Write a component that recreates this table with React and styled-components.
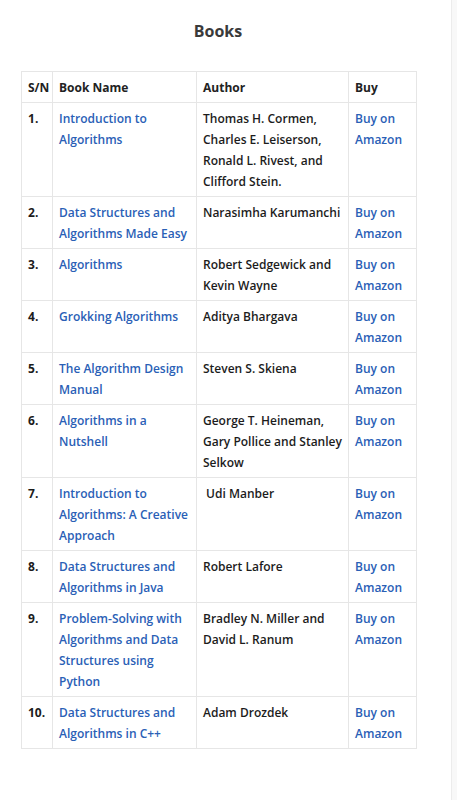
import styled, { createGlobalStyle } from "styled-components";

const GlobalStyle = createGlobalStyle`
    html, body {
        margin: 0;
        padding: 0;
        background: #f8f8f8;
    }
    body {
        font-family: "Open Sans", "Liberation Sans", sans-serif;
    }
`

const Page = styled.main`
    box-sizing: border-box;
    width: 452px;
    min-height: 800px;
    background: #fff;
    border-right: 1px solid #ececec;
    padding: 19px 21px 40px 21px;
`

const Title = styled.h2`
    margin: 0 0 28px;
    width: 394px;
    text-align: center;
    font-size: 16px;
    line-height: 24px;
    font-weight: 700;
    color: #3a3a3a;
`

const Table = styled.table`
    width: 395px;
    table-layout: fixed;
    border-collapse: collapse;
    font-size: 12px;
    font-weight: 600;
    line-height: 21px;
    color: #1c1c1c;

    & th, & td {
        border: 1px solid #e6e6e6;
        padding: 5px 6px 4px 6px;
        text-align: left;
        vertical-align: top;
    }

    & th {
        font-weight: 700;
        color: #222;
    }
`

const Col = styled.col`
    width: ${props => props.$w}px;
`

const Num = styled.td`
    font-weight: 700;
`

const Link = styled.a`
    color: #2a60b6;
    text-decoration: none;
    font-weight: 600;
`

const books = [
    { name: "Introduction to Algorithms", author: "Thomas H. Cormen, Charles E. Leiserson, Ronald L. Rivest, and Clifford Stein." },
    { name: "Data Structures and Algorithms Made Easy", author: "Narasimha Karumanchi" },
    { name: "Algorithms", author: "Robert Sedgewick and Kevin Wayne" },
    { name: "Grokking Algorithms", author: "Aditya Bhargava" },
    { name: "The Algorithm Design Manual", author: "Steven S. Skiena" },
    { name: "Algorithms in a Nutshell", author: "George T. Heineman, Gary Pollice and Stanley Selkow" },
    { name: "Introduction to Algorithms: A Creative Approach", author: "\u00a0Udi Manber" },
    { name: "Data Structures and Algorithms in Java", author: "Robert Lafore" },
    { name: "Problem-Solving with Algorithms and Data Structures using Python", author: "Bradley N. Miller and David L. Ranum" },
    { name: "Data Structures and Algorithms in C++", author: "Adam Drozdek" },
]

const App = () => {
    return (
        <>
            <GlobalStyle />
            <Page>
                <Title>Books</Title>
                <Table>
                    <colgroup>
                        <Col $w={31} />
                        <Col $w={144} />
                        <Col $w={152} />
                        <Col $w={68} />
                    </colgroup>
                    <thead>
                        <tr>
                            <th>S/N</th>
                            <th>Book Name</th>
                            <th>Author</th>
                            <th>Buy</th>
                        </tr>
                    </thead>
                    <tbody>
                        {books.map((book, index) => (
                            <tr key={index}>
                                <Num>{index + 1}.</Num>
                                <td><Link href="#">{book.name}</Link></td>
                                <td>{book.author}</td>
                                <td><Link href="#">Buy on Amazon</Link></td>
                            </tr>
                        ))}
                    </tbody>
                </Table>
            </Page>
        </>
    );
}

export default App;
